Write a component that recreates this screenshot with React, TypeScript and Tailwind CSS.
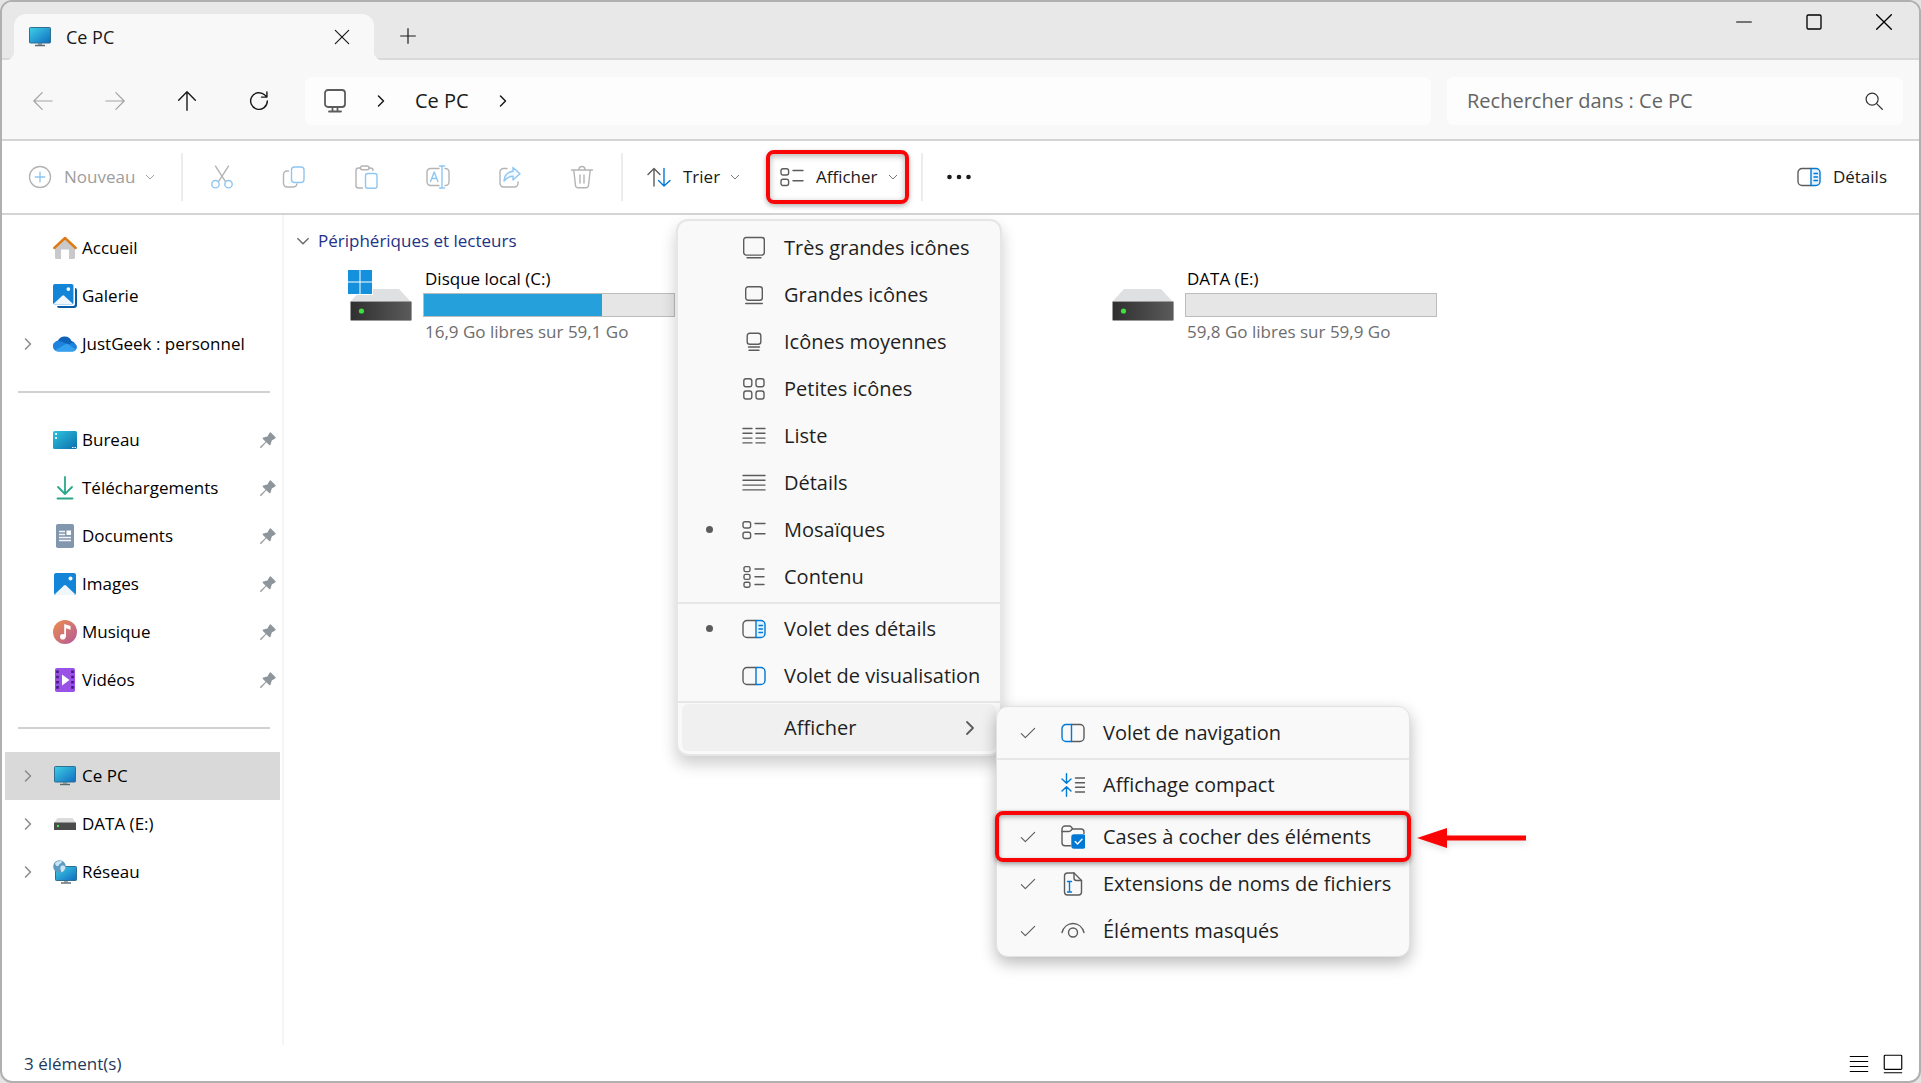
import { ReactNode, useState } from "react";

type IconProps = { className?: string };

const GRAY = "#5c5c5c";
const BLUE = "#0078d4";

function Svg({
  children,
  className = "size-6",
  stroke = GRAY,
}: {
  children: ReactNode;
  className?: string;
  stroke?: string;
}) {
  return (
    <svg
      viewBox="0 0 24 24"
      className={`${className} shrink-0`}
      fill="none"
      stroke={stroke}
      strokeWidth="1.4"
      strokeLinecap="round"
      strokeLinejoin="round"
      aria-hidden="true"
    >
      {children}
    </svg>
  );
}

/* ---------- generic glyphs ---------- */

function ChevronRight({ className = "size-6 text-[#8a8a8a]" }: IconProps) {
  return (
    <Svg className={className} stroke="currentColor">
      <path d="M9 6l6 6-6 6" strokeWidth="1.8" />
    </Svg>
  );
}

function ChevronDown({ className = "size-2.5 text-[#777777]" }: IconProps) {
  return (
    <svg viewBox="0 0 10 10" className={`${className} shrink-0`} fill="none" stroke="currentColor" aria-hidden="true">
      <path d="M1 3l4 4 4-4" />
    </svg>
  );
}

function Check() {
  return (
    <Svg className="size-4">
      <path d="M2 13l6 6L22 5" strokeWidth="1.7" />
    </Svg>
  );
}

/* ---------- view icons ---------- */

const ExtraLargeIcon = () => (
  <Svg>
    <rect x="1.7" y="1.5" width="20.6" height="17.6" rx="2.5" />
    <path d="M5 21.8h14" />
  </Svg>
);

const LargeIcon = () => (
  <Svg>
    <rect x="3.7" y="3.7" width="16.6" height="13.6" rx="2.5" />
    <path d="M3.7 20.5h16.6" />
  </Svg>
);

const MediumIcon = () => (
  <Svg>
    <rect x="5.2" y="3.2" width="13.6" height="11" rx="2.5" />
    <path d="M6.5 17h11M7 20.3h10" />
  </Svg>
);

const SmallIcon = () => (
  <Svg>
    <rect x="1.8" y="1.8" width="8" height="8" rx="2.2" />
    <rect x="14" y="1.8" width="8" height="8" rx="2.2" />
    <rect x="1.8" y="14" width="8" height="8" rx="2.2" />
    <rect x="14" y="14" width="8" height="8" rx="2.2" />
  </Svg>
);

const ListIcon = () => (
  <Svg>
    <path d="M1 4.5h9M1 9.3h9M1 14.1h9M1 18.9h9M14 4.5h9M14 9.3h9M14 14.1h9M14 18.9h9" />
  </Svg>
);

const DetailsIcon = () => (
  <Svg>
    <path d="M1 4.5h22M1 9.3h22M1 14.1h22M1 18.9h22" />
  </Svg>
);

const TilesIcon = () => (
  <Svg>
    <rect x="1" y="3.8" width="7.6" height="6.2" rx="2" />
    <rect x="1" y="14.3" width="7.6" height="6.2" rx="2" />
    <path d="M13 5.5h10M13 15.8h10" />
  </Svg>
);

const ContentIcon = () => (
  <Svg>
    <rect x="2" y="1.6" width="6" height="5" rx="1.6" />
    <rect x="2" y="9.4" width="6" height="5" rx="1.6" />
    <rect x="2" y="17.2" width="6" height="5" rx="1.6" />
    <path d="M13 4h9M13 11.7h9M13 19.5h9" />
  </Svg>
);

const DetailsPaneIcon = () => (
  <Svg>
    <path d="M14 3.5H5a4 4 0 0 0-4 4v9a4 4 0 0 0 4 4h9" />
    <path d="M14 3.5h5a4 4 0 0 1 4 4v9a4 4 0 0 1-4 4h-5z" stroke={BLUE} fill="#e3f3ff" />
    <path d="M17 8.5h3.5M17 12h3.5M17 15.5h3.5" stroke={BLUE} />
  </Svg>
);

const PreviewPaneIcon = () => (
  <Svg>
    <path d="M14 3.5H5a4 4 0 0 0-4 4v9a4 4 0 0 0 4 4h9" />
    <path d="M14 3.5h5a4 4 0 0 1 4 4v9a4 4 0 0 1-4 4h-5z" stroke={BLUE} />
  </Svg>
);

const NavPaneIcon = () => (
  <Svg>
    <path d="M10.500 3.500H19a4 4 0 0 1 4 4v9a4 4 0 0 1-4 4h-8.500" />
    <path d="M10.500 3.500H5a4 4 0 0 0-4 4v9a4 4 0 0 0 4 4h5.500z" stroke={BLUE} />
  </Svg>
);

const CompactIcon = () => (
  <Svg>
    <path d="M14.500 5H24M14.500 9.700H24M14.500 14.300H24M14.500 19H24" />
    <path d="M5.500 .8v9M1 6l4.500 4.300L10 6M5.500 23.200v-9M1 18l4.500-4.300L10 18" stroke={BLUE} />
  </Svg>
);

const CheckBoxesIcon = () => (
  <Svg>
    <path d="M9.500 20.800H4a3 3 0 0 1-3-3V4a3 3 0 0 1 3-3h4.200c1 0 1.600.4 2.200 1.200l1.400 1.800H20a3 3 0 0 1 3 3v1.500" />
    <path d="M1 6.500h6.500c1.200 0 1.700-.4 2.400-1.100L11.200 4" />
    <rect x="11" y="10" width="13" height="13" rx="2" fill={BLUE} stroke={BLUE} />
    <path d="M14.200 16.600l2.300 2.300 4.500-4.600" stroke="#ffffff" />
  </Svg>
);

const ExtensionsIcon = () => (
  <Svg>
    <path d="M13 1H6.500a3 3 0 0 0-3 3v16a3 3 0 0 0 3 3h11a3 3 0 0 0 3-3V8.500L13 1z" />
    <path d="M13 1v5a2.500 2.500 0 0 0 2.500 2.500h5" />
    <path d="M8.500 9.500v10.500M6.500 9.500h4M6.500 20h4" stroke={BLUE} />
  </Svg>
);

const EyeIcon = () => (
  <Svg>
    <path d="M1 13.500C2.500 8 6.800 4.500 12 4.500s9.500 3.500 11 9" />
    <circle cx="12" cy="13.500" r="4.500" />
  </Svg>
);

/* ---------- toolbar icons ---------- */

const DIM = "#b4b4b4";
const DIM_BLUE = "#8fc6f2";

const NewIcon = () => (
  <Svg stroke={DIM}>
    <circle cx="12" cy="12" r="10.500" />
    <path d="M12 7.300v9.400M7.300 12h9.400" stroke={DIM_BLUE} />
  </Svg>
);

const CutIcon = () => (
  <Svg stroke={DIM}>
    <path d="M5.500 1.200l10 15.500M18.500 1.200l-10 15.500" />
    <circle cx="5.500" cy="19.200" r="3.700" stroke={DIM_BLUE} />
    <circle cx="18.500" cy="19.200" r="3.700" stroke={DIM_BLUE} />
  </Svg>
);

const CopyIcon = () => (
  <Svg stroke={DIM}>
    <path d="M6.500 6H5a3.500 3.500 0 0 0-3.500 3.500v9A3.500 3.500 0 0 0 5 22h6.500a3.500 3.500 0 0 0 3.400-3" />
    <rect x="9.500" y="2" width="12.500" height="15.500" rx="3" stroke={DIM_BLUE} />
  </Svg>
);

const PasteIcon = () => (
  <Svg stroke={DIM}>
    <path d="M6.500 3H4.500A2.500 2.500 0 0 0 2 5.500v15A2.500 2.500 0 0 0 4.500 23h4M15 3h1.500A2.500 2.500 0 0 1 19 5.500" />
    <rect x="6.500" y="1" width="8.500" height="3.800" rx="1.800" />
    <rect x="11.500" y="8.500" width="11.500" height="14.700" rx="2.200" stroke={DIM_BLUE} />
  </Svg>
);

const RenameIcon = () => (
  <Svg stroke={DIM}>
    <path d="M13 3.500H4.500A3.500 3.500 0 0 0 1 7v10a3.500 3.500 0 0 0 3.500 3.500H13M19 3.500a3.500 3.500 0 0 1 4 3.500v10a3.500 3.500 0 0 1-4 3.500" />
    <path d="M4.500 16.500L8.200 7l3.700 9.500M5.700 13.500h5M16 1v22M13.500 1h5M13.500 23h5" stroke={DIM_BLUE} />
  </Svg>
);

const ShareIcon = () => (
  <Svg stroke={DIM}>
    <path d="M9 3.500H5.500A3.500 3.500 0 0 0 2 7v11.500A3.500 3.500 0 0 0 5.500 22h11a3.500 3.500 0 0 0 3.500-3.500V17" />
    <path
      d="M15 2.500l7 6.200-7 6.200v-3.600c-4 0-6.500 1.200-9 4.700.4-5.300 3.300-9 9-9.700z"
      stroke={DIM_BLUE}
      fill="#f3faff"
    />
  </Svg>
);

const TrashIcon = () => (
  <Svg stroke={DIM}>
    <path d="M1.500 5h21M9 4.500a3 3 0 0 1 6 0M3.800 5.500l1.700 15a2.500 2.500 0 0 0 2.500 2.200h8a2.500 2.500 0 0 0 2.500-2.200l1.700-15M10 10v8M14 10v8" />
  </Svg>
);

const SortIcon = () => (
  <Svg>
    <path d="M7 21V3.500M1 9.500l6-6 6 6" />
    <path d="M17 3.500V21M11.500 15.500L17 21l6-5.500" stroke={BLUE} />
  </Svg>
);

/* ---------- colored shell icons ---------- */

function MonitorIcon() {
  return (
    <svg viewBox="0 0 24 24" className="size-6 shrink-0" aria-hidden="true">
      <defs>
        <linearGradient id="screen" x1="0" y1="0" x2="1" y2="1">
          <stop offset="0" stopColor="#3fd0e6" />
          <stop offset="1" stopColor="#0f6cc0" />
        </linearGradient>
      </defs>
      <path d="M10 18h4v2.500h-4z" fill="#9aa5ab" />
      <path d="M7 20.500h10" stroke="#5a6870" strokeWidth="1.4" />
      <rect x="1.500" y="2.500" width="21" height="15.500" rx=".8" fill="url(#screen)" stroke="#2f6f8f" />
    </svg>
  );
}

function HomeIcon() {
  return (
    <svg viewBox="0 0 24 24" className="size-6 shrink-0" aria-hidden="true">
      <path d="M2 11.500L12 2l10 9.500v10.200a1.300 1.300 0 0 1-1.300 1.300H16v-9.500H8V23H3.300A1.300 1.300 0 0 1 2 21.700z" fill="#c9c9cb" />
      <path d="M1.300 12L12 2l10.700 10" fill="none" stroke="#dd7a16" strokeWidth="2.400" strokeLinecap="round" strokeLinejoin="round" />
    </svg>
  );
}

function PicturesIcon({ stacked = false }: { stacked?: boolean }) {
  return (
    <svg viewBox="0 0 24 24" className="size-6 shrink-0" aria-hidden="true">
      {stacked && <path d="M22 4a2 2 0 0 1 2 2v15a3 3 0 0 1-3 3H6a2 2 0 0 1-2-2h16a2 2 0 0 0 2-2z" fill="#0a5ba3" />}
      <g transform={stacked ? "scale(.93)" : "translate(1 1)"}>
        <rect width="22" height="22" rx="2" fill="#1285d8" />
        <path d="M1 21L10 12.500a1.500 1.500 0 0 1 2 0L21 21a2 2 0 0 1-1 1H2a2 2 0 0 1-1-1z" fill="#eff7fd" />
        <circle cx="16.500" cy="5.500" r="2" fill="#ffffff" />
      </g>
    </svg>
  );
}

function CloudIcon() {
  return (
    <svg viewBox="0 0 24 24" className="size-6 shrink-0" aria-hidden="true">
      <path d="M5.500 19A5.500 5.500 0 0 1 5 8.500 7.500 7.500 0 0 1 18.500 9 5.200 5.200 0 0 1 18.800 19z" fill="#0f63b8" />
      <path d="M5.500 19.500a5.300 5.300 0 0 1-3.500-9.500c3-2 6-1 9 .7l4.500 2 3-1.700A4.500 4.500 0 0 1 24 15a4.600 4.600 0 0 1-5 4.500z" fill="#1d83dc" />
      <path d="M2.200 18L14 11.500l9 6c-1 1.300-2.200 2-4 2H5.500A5 5 0 0 1 2.200 18z" fill="#33a0f0" />
    </svg>
  );
}

function DesktopIcon() {
  return (
    <svg viewBox="0 0 24 24" className="size-6 shrink-0" aria-hidden="true">
      <defs>
        <linearGradient id="desk" x1="0" y1="0" x2="1" y2="1">
          <stop offset="0" stopColor="#2fc3dd" />
          <stop offset="1" stopColor="#0c6fae" />
        </linearGradient>
      </defs>
      <rect y="3" width="24" height="18" rx="1.500" fill="url(#desk)" />
      <path d="M2 5h2v2H2zM2 9h2v2H2z" fill="#d8fbff" />
      <path d="M19 19.500h1.500M21.500 19.500H23" stroke="#ffffff" />
    </svg>
  );
}

function DownloadIcon() {
  return (
    <Svg stroke="#2aa78a">
      <path d="M12 1v16M5 11l7 7 7-7M4.500 22.500h15" strokeWidth="1.800" />
    </Svg>
  );
}

function DocumentIcon() {
  return (
    <svg viewBox="0 0 24 24" className="size-6 shrink-0" aria-hidden="true">
      <rect x="3" width="18" height="24" rx="1.800" fill="#8296ad" />
      <path d="M6 7.500h6M6 10.500h6M6 13.500h12M6 16.500h12" stroke="#f2f6fa" strokeWidth="1.300" />
      <rect x="13.500" y="6.500" width="4.500" height="4.500" fill="#ffffff" />
    </svg>
  );
}

function MusicIcon() {
  return (
    <svg viewBox="0 0 24 24" className="size-6 shrink-0" aria-hidden="true">
      <defs>
        <linearGradient id="music" x1="0" y1="0" x2="1" y2="1">
          <stop offset="0" stopColor="#ee8f4c" />
          <stop offset="1" stopColor="#b3589c" />
        </linearGradient>
      </defs>
      <circle cx="12" cy="12" r="12" fill="url(#music)" />
      <circle cx="9.800" cy="16.800" r="2.800" fill="#ffffff" />
      <path d="M11.200 17V4l6.300 2v3.800l-4.500-1.500V17z" fill="#ffffff" />
    </svg>
  );
}

function VideoIcon() {
  return (
    <svg viewBox="0 0 24 24" className="size-6 shrink-0" aria-hidden="true">
      <rect x="2" width="20" height="24" rx="1.800" fill="#9a52e6" />
      <path d="M4.500 2.500v20M19.500 2.500v20" stroke="#441c80" strokeWidth="2.600" strokeDasharray="2.600 2.600" />
      <path d="M9 6.500l7.500 5.500L9 17.500z" fill="#ffffff" />
    </svg>
  );
}

function SmallDriveIcon() {
  return (
    <svg viewBox="0 0 24 24" className="size-6 shrink-0" aria-hidden="true">
      <path d="M4.500 6h15l3.500 5H1z" fill="#dcdcdc" />
      <rect x="1" y="10.500" width="22" height="7.500" rx=".5" fill="#4b4b4b" />
      <circle cx="5" cy="14" r="1.200" fill="#4be04b" />
    </svg>
  );
}

function NetworkIcon() {
  return (
    <svg viewBox="0 0 24 24" className="size-6 shrink-0" aria-hidden="true">
      <path d="M11 20h4v2.500h-4z" fill="#9aa5ab" />
      <path d="M8 23h10" stroke="#5a6870" strokeWidth="1.400" />
      <rect x="2.500" y="6.500" width="21" height="14" rx=".8" fill="url(#screen)" stroke="#2f6f8f" />
      <circle cx="6.500" cy="6.500" r="6.300" fill="#5c9cc4" />
      <path d="M2 3.500c2-2.500 5-3 7-2-.5 2-2.500 2-3 3.500S3 7 2 3.500zM8 6c2-1 3.500 0 4.500 1-.5 3-2 4.500-4 5.500C8 10 6.500 8.500 8 6z" fill="#cfe4f0" />
    </svg>
  );
}

function PinIcon() {
  return (
    <svg viewBox="0 0 16 16" className="size-4 shrink-0" fill="#8f969b" aria-hidden="true">
      <path d="M9.600.8a1 1 0 0 1 1.500 0l4.200 4.200a1 1 0 0 1-.2 1.500l-3.300 2-1.200 4.100a.8.800 0 0 1-1.400.4L6.300 10.200 1.300 15.700 0 16l.3-1.300 5.300-5-2.700-2.800a.8.800 0 0 1 .4-1.400l4.100-1.100z" />
    </svg>
  );
}

function DriveIcon({ system }: { system: boolean }) {
  return (
    <svg viewBox="0 0 66 54" className="h-[54px] w-[66px] shrink-0" aria-hidden="true">
      <defs>
        <linearGradient id="body" x1="0" y1="0" x2="1" y2="0">
          <stop offset="0" stopColor="#2f2f2f" />
          <stop offset="1" stopColor="#5b5b5b" />
        </linearGradient>
      </defs>
      <path d="M15 20h37l12 13H3z" fill="#dfe0e2" />
      <rect x="3.500" y="32.500" width="61" height="19" rx="1" fill="url(#body)" stroke="#9b9b9b" />
      <circle cx="14.500" cy="42" r="2.600" fill="#3de03d" />
      {system && (
        <g>
          <rect width="26" height="26" x="0" y="0" fill="#ffffff" />
          <path d="M1 1h11.500v11.500H1zM13.500 1H25v11.500H13.500zM1 13.500h11.500V25H1zM13.500 13.500H25V25H13.500z" fill="#1590dc" />
        </g>
      )}
    </svg>
  );
}

/* ---------- data ---------- */

interface SidebarEntry {
  label: string;
  icon: ReactNode;
  expandable?: boolean;
  pinned?: boolean;
  active?: boolean;
}

const sidebarGroups: SidebarEntry[][] = [
  [
    { label: "Accueil", icon: <HomeIcon /> },
    { label: "Galerie", icon: <PicturesIcon stacked /> },
    { label: "JustGeek : personnel", icon: <CloudIcon />, expandable: true },
  ],
  [
    { label: "Bureau", icon: <DesktopIcon />, pinned: true },
    { label: "Téléchargements", icon: <DownloadIcon />, pinned: true },
    { label: "Documents", icon: <DocumentIcon />, pinned: true },
    { label: "Images", icon: <PicturesIcon />, pinned: true },
    { label: "Musique", icon: <MusicIcon />, pinned: true },
    { label: "Vidéos", icon: <VideoIcon />, pinned: true },
  ],
  [
    { label: "Ce PC", icon: <MonitorIcon />, expandable: true, active: true },
    { label: "DATA (E:)", icon: <SmallDriveIcon />, expandable: true },
    { label: "Réseau", icon: <NetworkIcon />, expandable: true },
  ],
];

const drives = [
  { name: "Disque local (C:)", free: 16.9, total: 59.1, column: "col-start-1", system: true },
  { name: "DATA (E:)", free: 59.8, total: 59.9, column: "col-start-3", system: false },
];

const layouts = [
  { label: "Très grandes icônes", icon: <ExtraLargeIcon /> },
  { label: "Grandes icônes", icon: <LargeIcon /> },
  { label: "Icônes moyennes", icon: <MediumIcon /> },
  { label: "Petites icônes", icon: <SmallIcon /> },
  { label: "Liste", icon: <ListIcon /> },
  { label: "Détails", icon: <DetailsIcon /> },
  { label: "Mosaïques", icon: <TilesIcon /> },
  { label: "Contenu", icon: <ContentIcon /> },
];

const panes = [
  { label: "Volet des détails", icon: <DetailsPaneIcon /> },
  { label: "Volet de visualisation", icon: <PreviewPaneIcon /> },
];

const fileActions = [
  { label: "Couper", icon: <CutIcon /> },
  { label: "Copier", icon: <CopyIcon /> },
  { label: "Coller", icon: <PasteIcon /> },
  { label: "Renommer", icon: <RenameIcon /> },
  { label: "Partager", icon: <ShareIcon /> },
  { label: "Supprimer", icon: <TrashIcon /> },
];

const formatGo = (value: number) => `${value.toFixed(1).replace(".", ",")} Go`;

/* ---------- sections ---------- */

function TitleBar() {
  return (
    <header className="flex h-[58px] border-b-2 border-[#d9d9d9] bg-[#e8e8e8] pl-3">
      <div className="relative mt-3 -mb-0.5 flex w-[360px] items-center rounded-t-xl bg-[#f8f8f8] pr-6 pl-3.5 before:absolute before:bottom-0 before:-left-2 before:size-2 before:rounded-br-lg before:shadow-[3px_3px_0_#f8f8f8] after:absolute after:-right-2 after:bottom-0 after:size-2 after:rounded-bl-lg after:shadow-[-3px_3px_0_#f8f8f8]">
        <MonitorIcon />
        <span className="ml-3.5 text-[18px] font-medium">Ce PC</span>
        <button aria-label="Fermer l'onglet" className="ml-auto">
          <Svg className="size-4" stroke="#1a1a1a">
            <path d="M2 2l20 20M22 2L2 22" strokeWidth="1.800" />
          </Svg>
        </button>
      </div>
      <button aria-label="Nouvel onglet" className="mt-3 ml-[26px]">
        <Svg className="size-4" stroke="#1a1a1a">
          <path d="M12 1v22M1 12h22" strokeWidth="1.800" />
        </Svg>
      </button>
      <div className="ml-auto flex h-10 items-center">
        <button aria-label="Réduire" className="flex w-[70px] justify-center">
          <Svg className="size-4" stroke="#000000">
            <path d="M1 12h22" strokeWidth="1.800" />
          </Svg>
        </button>
        <button aria-label="Agrandir" className="flex w-[70px] justify-center">
          <Svg className="size-4" stroke="#000000">
            <rect x="1.500" y="1.500" width="21" height="21" rx="2" strokeWidth="2" />
          </Svg>
        </button>
        <button aria-label="Fermer" className="flex w-[70px] justify-center">
          <Svg className="size-4" stroke="#000000">
            <path d="M1 1l22 22M23 1L1 23" strokeWidth="2" />
          </Svg>
        </button>
      </div>
    </header>
  );
}

function AddressBar() {
  return (
    <div className="flex h-[81px] items-center border-b-2 border-[#d4d4d4] bg-[#f8f8f8] pt-0.5 pr-4 pl-[5px]">
      <button aria-label="Précédent" disabled className="flex w-[72px] justify-center">
        <Svg className="size-5" stroke="#a3a3a3">
          <path d="M23 12H1M11 2L1 12l10 10" />
        </Svg>
      </button>
      <button aria-label="Suivant" disabled className="flex w-[72px] justify-center">
        <Svg className="size-5" stroke="#a3a3a3">
          <path d="M1 12h22M13 2l10 10-10 10" />
        </Svg>
      </button>
      <button aria-label="Dossier parent" className="flex w-[72px] justify-center">
        <Svg className="size-5" stroke="#1a1a1a">
          <path d="M12 23V1M2 11L12 1l10 10" strokeWidth="1.700" />
        </Svg>
      </button>
      <button aria-label="Actualiser" className="flex w-[72px] justify-center">
        <Svg className="size-5" stroke="#1a1a1a">
          <path d="M22 12a10 10 0 1 1-3-7.100l2.500 2.300M21.500 1v6.300H15" strokeWidth="1.700" />
        </Svg>
      </button>
      <div className="ml-2.5 flex h-12 min-w-0 flex-1 items-center rounded-md bg-[#fdfdfd] pl-[18px]">
        <Svg>
          <rect x="2" y="1" width="20" height="17" rx="3" strokeWidth="1.800" />
          <path d="M9.500 18v4M14.500 18v4M6 22.500h12" strokeWidth="1.800" />
        </Svg>
        <ChevronRight className="ml-6 size-5 text-[#1a1a1a]" />
        <a href="#" className="ml-6 text-[20px]">
          Ce PC
        </a>
        <ChevronRight className="ml-6 size-5 text-[#1a1a1a]" />
      </div>
      <label className="ml-4 flex h-12 w-[456px] items-center rounded-md bg-[#fdfdfd] pr-5 pl-5">
        <input
          type="search"
          aria-label="Rechercher"
          placeholder="Rechercher dans : Ce PC"
          className="min-w-0 flex-1 bg-transparent text-[20px] outline-none placeholder:text-[#646464]"
        />
        <Svg className="size-[18px]" stroke="#333333">
          <circle cx="9.500" cy="9.500" r="8" strokeWidth="1.600" />
          <path d="M15.500 15.500L23 23" strokeWidth="1.600" />
        </Svg>
      </label>
    </div>
  );
}

function MenuSeparator() {
  return <div role="separator" className="mt-0.5 mb-px h-0.5 bg-[#e7e7e7]" />;
}

function MenuRow({
  label,
  icon,
  mark,
  role,
  checked,
  onClick,
}: {
  label: string;
  icon: ReactNode;
  mark: ReactNode;
  role: "menuitemradio" | "menuitemcheckbox";
  checked: boolean;
  onClick: () => void;
}) {
  return (
    <button role={role} aria-checked={checked} onClick={onClick} className="flex h-[47px] w-full items-center pl-[23px]">
      <span className="flex w-4 justify-center">{checked && mark}</span>
      <span className="ml-[25px]">{icon}</span>
      <span className="ml-[18px] whitespace-nowrap">{label}</span>
    </button>
  );
}

function ShowSubmenu() {
  const [enabled, setEnabled] = useState<Record<string, boolean>>({
    navigation: true,
    compact: false,
    checkboxes: true,
    extensions: true,
    hidden: true,
  });

  const row = (key: string, label: string, icon: ReactNode) => (
    <MenuRow
      role="menuitemcheckbox"
      label={label}
      icon={icon}
      mark={<Check />}
      checked={enabled[key]}
      onClick={() => setEnabled({ ...enabled, [key]: !enabled[key] })}
    />
  );

  return (
    <div
      role="menu"
      className="absolute top-0.5 left-full w-[414px] rounded-xl border border-[#e2e2e2] bg-[#f9f9f9] py-0.5 shadow-[0_6px_16px_rgba(0,0,0,0.28)]"
    >
      {row("navigation", "Volet de navigation", <NavPaneIcon />)}
      <MenuSeparator />
      {row("compact", "Affichage compact", <CompactIcon />)}
      <MenuSeparator />
      <div className="relative">
        {row("checkboxes", "Cases à cocher des éléments", <CheckBoxesIcon />)}
        <div className="pointer-events-none absolute -inset-x-0.5 -inset-y-0.5 rounded-lg border-4 border-[#f90505] shadow-[0_2px_5px_rgba(0,0,0,0.4),inset_0_2px_5px_rgba(0,0,0,0.3)]" />
        <svg
          viewBox="0 0 110 22"
          className="absolute top-[14px] left-full ml-2 h-[22px] w-[110px] drop-shadow-md"
          fill="#f90505"
          aria-hidden="true"
        >
          <path d="M0 11L30 1v7.500h79v5H30V21z" />
        </svg>
      </div>
      {row("extensions", "Extensions de noms de fichiers", <ExtensionsIcon />)}
      {row("hidden", "Éléments masqués", <EyeIcon />)}
    </div>
  );
}

function ViewMenu() {
  const [layout, setLayout] = useState("Mosaïques");
  const [pane, setPane] = useState("Volet des détails");
  const dot = <span className="size-[7px] rounded-full bg-[#5c5c5c]" />;

  return (
    <div
      role="menu"
      className="absolute top-full -left-[90px] z-10 mt-[15px] w-[326px] rounded-xl border-2 border-[#e6e6e6] bg-[#f9f9f9] py-[3px] text-[20px] text-[#1f1f1f] shadow-[0_8px_16px_rgba(0,0,0,0.2)]"
    >
      {layouts.map((item) => (
        <MenuRow
          key={item.label}
          {...item}
          role="menuitemradio"
          mark={dot}
          checked={layout === item.label}
          onClick={() => setLayout(item.label)}
        />
      ))}
      <MenuSeparator />
      {panes.map((item) => (
        <MenuRow
          key={item.label}
          {...item}
          role="menuitemradio"
          mark={dot}
          checked={pane === item.label}
          onClick={() => setPane(item.label)}
        />
      ))}
      <MenuSeparator />
      <div className="relative mr-1 ml-1">
        <button
          aria-haspopup="menu"
          aria-expanded="true"
          className="flex h-[47px] w-full items-center rounded-md bg-[#f0f0f0] pr-3.5 pl-[102px]"
        >
          Afficher
          <ChevronRight className="ml-auto size-6 text-[#5c5c5c]" />
        </button>
        <ShowSubmenu />
      </div>
    </div>
  );
}

function Toolbar() {
  const [menuOpen, setMenuOpen] = useState(true);

  return (
    <div className="flex h-[74px] items-center border-b-2 border-[#d4d4d4] bg-white text-[17px]">
      <button disabled className="flex h-12 w-[179px] items-center pl-[26px] text-[#9d9d9d]">
        <NewIcon />
        <span className="mr-2.5 ml-3">Nouveau</span>
        <ChevronDown className="size-2.5 text-[#a3a3a3]" />
      </button>
      <div className="flex h-12 items-center border-x-2 border-[#ececec] px-[3px]">
        {fileActions.map((action) => (
          <button key={action.label} aria-label={action.label} disabled className="flex w-[72px] justify-center">
            {action.icon}
          </button>
        ))}
      </div>
      <button className="flex h-12 w-[143px] items-center pl-6">
        <SortIcon />
        <span className="mr-2.5 ml-3">Trier</span>
        <ChevronDown />
      </button>
      <div className="relative">
        <button
          aria-haspopup="menu"
          aria-expanded={menuOpen}
          onClick={() => setMenuOpen(!menuOpen)}
          className="flex h-[54px] w-[143px] items-center rounded-lg border-4 border-[#f90505] pl-2.5 shadow-[0_2px_5px_rgba(0,0,0,0.3),inset_0_2px_6px_rgba(0,0,0,0.3)]"
        >
          <TilesIcon />
          <span className="mr-2.5 ml-3">Afficher</span>
          <ChevronDown />
        </button>
        {menuOpen && <ViewMenu />}
      </div>
      <button aria-label="Plus d'options" className="ml-3 flex h-12 items-center border-l-2 border-[#ececec] pl-6">
        <svg viewBox="0 0 24 24" className="size-6" fill="#1a1a1a" aria-hidden="true">
          <circle cx="2.500" cy="12" r="2.300" />
          <circle cx="12" cy="12" r="2.300" />
          <circle cx="21.500" cy="12" r="2.300" />
        </svg>
      </button>
      <button className="mr-8 ml-auto flex items-center gap-3">
        <DetailsPaneIcon />
        Détails
      </button>
    </div>
  );
}

function Sidebar() {
  return (
    <nav className="w-[282px] shrink-0 border-r-2 border-[#f5f5f5] pt-[9px] text-[17px] text-black">
      {sidebarGroups.map((group, index) => (
        <div key={index}>
          {index > 0 && (
            <div className="mr-3 ml-4 flex h-12 items-center">
              <hr className="w-full border-t-2 border-[#d2d2d2]" />
            </div>
          )}
          <ul className="mr-0.5 ml-[3px]">
            {group.map((entry) => (
              <li key={entry.label}>
                <a
                  href="#"
                  className={`flex h-12 items-center pr-1 pl-[13px] ${entry.active ? "bg-[#d9d9d9]" : "hover:bg-gray-100"}`}
                >
                  <span className="mr-[15px] w-5">
                    {entry.expandable && <ChevronRight className="size-5 text-[#8a8a8a]" />}
                  </span>
                  {entry.icon}
                  <span className="ml-[5px] flex-1 whitespace-nowrap">{entry.label}</span>
                  {entry.pinned && <PinIcon />}
                </a>
              </li>
            ))}
          </ul>
        </div>
      ))}
    </nav>
  );
}

function DriveTile({ drive }: { drive: (typeof drives)[number] }) {
  const used = Math.floor(((drive.total - drive.free) / drive.total) * 100);

  return (
    <div className={`${drive.column} flex`}>
      <DriveIcon system={drive.system} />
      <div className="ml-2.5 w-[252px]">
        <p className="pb-1 pl-0.5 leading-5 text-black">{drive.name}</p>
        <div className="h-6 border border-[#bcbcbc] bg-[#e6e6e6]">
          <div className="h-full bg-[#26a0da]" style={{ width: `${used}%` }} />
        </div>
        <p className="pt-[3px] pl-0.5 leading-6 text-[#6d6d6d]">
          {formatGo(drive.free)} libres sur {formatGo(drive.total)}
        </p>
      </div>
    </div>
  );
}

function DriveList() {
  return (
    <main className="min-w-0 flex-1 pt-3.5 pl-3 text-[17px]">
      <h2 className="flex items-center gap-2 leading-6 text-[#1e3287]">
        <ChevronDown className="size-3.5 text-[#6b6b6b]" />
        Périphériques et lecteurs
      </h2>
      <div className="mt-4 ml-[51px] grid grid-cols-[repeat(3,381px)]">
        {drives.map((drive) => (
          <DriveTile key={drive.name} drive={drive} />
        ))}
      </div>
    </main>
  );
}

function StatusBar() {
  return (
    <footer className="flex h-9 items-center pt-0.5 pr-4 pl-[22px] text-[17px] text-[#1e395b]">
      <span>3 élément(s)</span>
      <div className="ml-auto flex items-center gap-3.5">
        <button aria-label="Affichage détaillé">
          <Svg className="size-5" stroke="#000000">
            <path d="M1.500 3h21M1.500 9h21M1.500 15h21M1.500 21h21" />
          </Svg>
        </button>
        <button aria-label="Grandes miniatures">
          <Svg className="size-5" stroke="#000000">
            <rect x="1.500" y="1.500" width="21" height="17" rx="1" />
            <path d="M1.500 22.500h21" />
          </Svg>
        </button>
      </div>
    </footer>
  );
}

export default function App() {
  return (
    <div className="min-h-screen bg-[#e4e4e4] font-['Open_Sans','Noto_Sans',sans-serif] text-[#1a1a1a]">
      <div className="flex min-h-screen flex-col overflow-hidden rounded-xl border-2 border-[#b0b0b0] bg-white">
        <TitleBar />
        <AddressBar />
        <Toolbar />
        <div className="flex flex-1">
          <Sidebar />
          <DriveList />
        </div>
        <StatusBar />
      </div>
    </div>
  );
}
